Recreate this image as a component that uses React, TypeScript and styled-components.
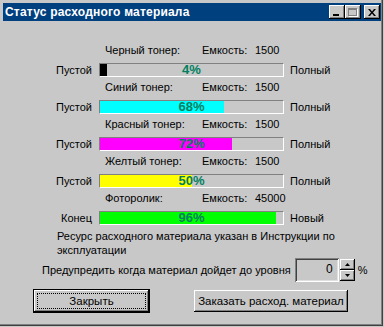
import React from "react"
import styled, { createGlobalStyle } from "styled-components"

const Global = createGlobalStyle`
  html, body { margin: 0; padding: 0; background: #c8c8c8; }
  body { font-family: "Liberation Sans", Arial, sans-serif; font-size: 11px; color: #000; }
`

type Item = {
  name: string
  capacity: string
  percent: number
  color: string
  left: string
  right: string
}

const items: Item[] = [
  { name: "Черный тонер:", capacity: "1500", percent: 4, color: "#000000", left: "Пустой", right: "Полный" },
  { name: "Синий тонер:", capacity: "1500", percent: 68, color: "#00ffff", left: "Пустой", right: "Полный" },
  { name: "Красный тонер:", capacity: "1500", percent: 72, color: "#ff00ff", left: "Пустой", right: "Полный" },
  { name: "Желтый тонер:", capacity: "1500", percent: 50, color: "#ffff00", left: "Пустой", right: "Полный" },
  { name: "Фоторолик:", capacity: "45000", percent: 96, color: "#00ff00", left: "Конец", right: "Новый" },
]

const App = () => {
  return (
    <>
      <Global />
      <Window>
        <TitleBar>
          <Title>Статус расходного материала</Title>
          <Caption>
            <CapBtn>
              <MinGlyph />
            </CapBtn>
            <CapBtn>
              <MaxGlyph />
            </CapBtn>
            <CapBtn close>
              <svg width="8" height="7" viewBox="0 0 8 7">
                <path d="M0 0h2l2 2.5L6 0h2L5 3.5 8 7H6L4 4.5 2 7H0l3-3.5z" fill="#000" />
              </svg>
            </CapBtn>
          </Caption>
        </TitleBar>

        <Body>
          <Rows>
            {items.map((it) => (
              <Row key={it.name}>
                <Header>
                  <Name>{it.name}</Name>
                  <CapLabel>Емкость:</CapLabel>
                  <span>{it.capacity}</span>
                </Header>
                <SideLabel>{it.left}</SideLabel>
                <Bar>
                  <Fill color={it.color} style={{ width: `${it.percent}%` }} />
                  <Percent>{it.percent}%</Percent>
                </Bar>
                <RightLabel>{it.right}</RightLabel>
              </Row>
            ))}
          </Rows>

          <Note>Ресурс расходного материала указан в Инструкции по эксплуатации</Note>

          <WarnRow>
            <span>Предупредить когда материал дойдет до уровня</span>
            <Field>0</Field>
            <Spin>
              <SpinBtn>
                <svg width="5" height="3" viewBox="0 0 5 3"><path d="M2.5 0L5 3H0z" fill="#000" /></svg>
              </SpinBtn>
              <SpinBtn>
                <svg width="5" height="3" viewBox="0 0 5 3"><path d="M0 0h5L2.5 3z" fill="#000" /></svg>
              </SpinBtn>
            </Spin>
            <Pct>%</Pct>
          </WarnRow>

          <Buttons>
            <Button primary>
              <Focus>Закрыть</Focus>
            </Button>
            <Button>Заказать расход. материал</Button>
          </Buttons>
        </Body>
      </Window>
    </>
  )
}

export default App

const Window = styled.div`
  box-sizing: border-box;
  width: 384px;
  height: 327px;
  padding: 3px 3px 0 3px;
  background: #c8c8c8;
  box-shadow: inset -1px -1px 0 #c8c8c8, inset -2px -2px 0 #404040, inset -3px -3px 0 #808080;
  display: flex;
  flex-direction: column;
`

const TitleBar = styled.div`
  height: 18px;
  width: 378px;
  background: #00407f;
  display: flex;
  align-items: center;
  padding-left: 2px;
  box-sizing: border-box;
`

const Title = styled.div`
  color: #fff;
  font-weight: bold;
  font-size: 12px;
  letter-spacing: 0.2px;
`

const Caption = styled.div`
  margin-left: auto;
  margin-right: 1px;
  display: flex;
  align-items: center;
`

const CapBtn = styled.div<{ close?: boolean }>`
  box-sizing: border-box;
  width: 16px;
  height: 14px;
  margin-left: ${(p) => (p.close ? "3px" : "0")};
  background: #c8c8c8;
  box-shadow: inset -1px -1px 0 #000, inset 1px 1px 0 #fff, inset -2px -2px 0 #808080;
  display: flex;
  align-items: center;
  justify-content: center;
`

const MinGlyph = styled.div`
  width: 6px;
  height: 2px;
  background: #000;
  margin-top: 6px;
  margin-right: 2px;
`

const MaxGlyph = styled.div`
  box-sizing: border-box;
  width: 9px;
  height: 8px;
  border: 1px solid #808080;
  border-top-width: 2px;
  box-shadow: 1px 1px 0 #fff;
  margin-right: 1px;
`

const Body = styled.div`
  display: flex;
  flex-direction: column;
`

const Rows = styled.div`
  margin-top: 23px;
  display: flex;
  flex-direction: column;
  gap: 4px;
`

const Row = styled.div`
  display: grid;
  grid-template-columns: 96px 185px 1fr;
  grid-template-rows: 13px 14px;
  row-gap: 6px;
  align-items: center;
`

const Header = styled.div`
  grid-column: 2 / 4;
  grid-row: 1;
  display: flex;
  line-height: 13px;
  white-space: nowrap;
`

const Name = styled.span`
  width: 97px;
  padding-left: 6px;
`

const CapLabel = styled.span`
  width: 53px;
`

const SideLabel = styled.div`
  grid-column: 1;
  grid-row: 2;
  text-align: right;
  padding-right: 7px;
  line-height: 13px;
`

const RightLabel = styled.div`
  grid-column: 3;
  grid-row: 2;
  padding-left: 6px;
  line-height: 13px;
`

const Bar = styled.div`
  grid-column: 2;
  grid-row: 2;
  box-sizing: border-box;
  height: 14px;
  border: 1px solid;
  border-color: #808080 #ffffff #ffffff #808080;
  background: #c8c8c8;
  display: grid;
`

const Fill = styled.div<{ color: string }>`
  grid-area: 1 / 1;
  justify-self: start;
  height: 100%;
  background: ${(p) => p.color};
`

const Percent = styled.div`
  grid-area: 1 / 1;
  justify-self: center;
  align-self: center;
  font-weight: bold;
  font-size: 13px;
  line-height: 12px;
  color: #008060;
`

const Note = styled.div`
  margin-top: 4px;
  padding-left: 54px;
  width: 285px;
  line-height: 14px;
`

const WarnRow = styled.div`
  margin-top: 1px;
  height: 24px;
  padding-left: 39px;
  display: flex;
  align-items: center;
  white-space: nowrap;
`

const Field = styled.div`
  box-sizing: border-box;
  margin-left: 4px;
  width: 44px;
  height: 24px;
  background: #c8c8c8;
  box-shadow: inset 1px 1px 0 #808080, inset -1px -1px 0 #fff, inset 2px 2px 0 #404040, inset -2px -2px 0 #dfdfdf;
  text-align: right;
  padding: 0 6px 0 0;
  font-size: 12px;
  line-height: 22px;
`

const Spin = styled.div`
  margin-left: 1px;
  display: flex;
  flex-direction: column;
`

const SpinBtn = styled.div`
  box-sizing: border-box;
  width: 15px;
  height: 11px;
  background: #c8c8c8;
  box-shadow: inset -1px -1px 0 #000, inset 1px 1px 0 #fff, inset -2px -2px 0 #808080;
  display: flex;
  align-items: center;
  justify-content: center;
`

const Pct = styled.span`
  margin-left: 3px;
`

const Buttons = styled.div`
  margin-top: 7px;
  height: 24px;
  display: flex;
  align-items: center;
  padding-left: 30px;
`

const Button = styled.div<{ primary?: boolean }>`
  box-sizing: border-box;
  height: ${(p) => (p.primary ? "24px" : "22px")};
  width: ${(p) => (p.primary ? "117px" : "154px")};
  margin-left: ${(p) => (p.primary ? "0" : "44px")};
  background: #c8c8c8;
  border: ${(p) => (p.primary ? "1px solid #000" : "none")};
  box-shadow: inset -1px -1px 0 #000, inset 1px 1px 0 #fff, inset -2px -2px 0 #808080;
  display: flex;
  align-items: center;
  justify-content: center;
  font-size: 11.5px;
  padding: 3px;
`

const Focus = styled.div`
  box-sizing: border-box;
  width: 100%;
  height: 100%;
  border: 1px dotted #000;
  display: flex;
  align-items: center;
  justify-content: center;
`
